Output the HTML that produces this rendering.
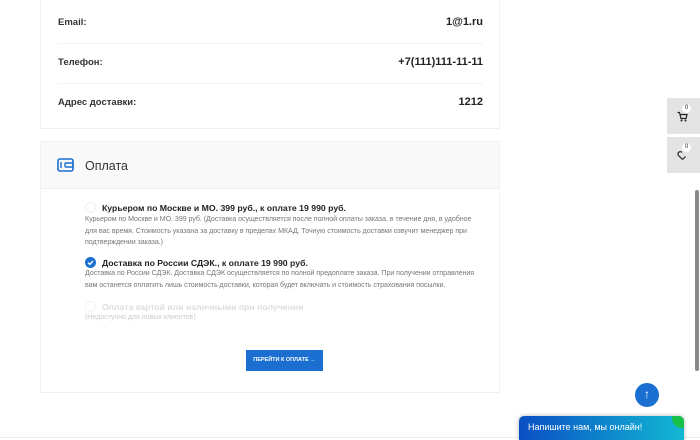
<!DOCTYPE html>
<html><head><meta charset="utf-8"><style>
*{margin:0;padding:0;box-sizing:border-box}
body{width:700px;height:438px;overflow:hidden;background:#fff;font-family:"Liberation Sans",sans-serif;position:relative;color:#222}
.card{position:absolute;left:40px;width:460px;border:1px solid #f0f0f0;background:#fff}
.row{position:absolute;left:17px;right:16px;font-size:9.5px;font-weight:bold;color:#333}
.row b{position:absolute;right:0;top:-1px;font-size:11px;color:#222}
.sep{position:absolute;left:17px;right:16px;height:1px;background:#f3f3f3}
.hdr{position:absolute;left:0;top:0;width:458px;height:47px;background:#f9f9f9;border-bottom:1px solid #eee}
.opt{position:absolute;left:44px;font-size:8.7px;font-weight:bold;color:#222}
.desc{position:absolute;left:44px;width:420px;font-size:7.1px;line-height:11.5px;color:#777;letter-spacing:-0.05px}
.rad{position:absolute;width:11px;height:11px;border-radius:50%;border:1px solid #eee;background:#fff}
</style></head><body>
<div class="card" style="top:-2px;height:131px">
 <div class="row" style="top:18px">Email:<b>1@1.ru</b></div>
 <div class="sep" style="top:44px"></div>
 <div class="row" style="top:58px">Телефон:<b>+7(111)111-11-11</b></div>
 <div class="sep" style="top:84px"></div>
 <div class="row" style="top:98px">Адрес доставки:<b>1212</b></div>
</div>
<div class="card" style="top:141px;height:252px">
 <div class="hdr">
  <svg style="position:absolute;left:16px;top:16px" width="17" height="14" viewBox="0 0 17 14"><rect x="1" y="1" width="15" height="12" rx="2" fill="none" stroke="#1a6fd0" stroke-width="1.6"/><rect x="8" y="5" width="8" height="4" rx="1" fill="none" stroke="#1a6fd0" stroke-width="1.4"/><line x1="4" y1="4" x2="4" y2="10" stroke="#1a6fd0" stroke-width="1.4"/></svg>
  <div style="position:absolute;left:44px;top:17px;font-size:12.5px;color:#333">Оплата</div>
 </div>
 <div class="rad" style="left:44px;top:60px"></div>
 <div class="opt" style="left:61px;top:61px">Курьером по Москве и МО. 399 руб., к оплате 19 990 руб.</div>
 <div class="desc" style="top:72px">Курьером по Москве и МО. 399 руб. (Доставка осуществляется после полной оплаты заказа, в течение дня, в удобное<br>для вас время. Стоимость указана за доставку в пределах МКАД. Точную стоимость доставки озвучит менеджер при<br>подтверждении заказа.)</div>
 <div class="rad" style="left:44px;top:115px;background:#1a6fd0;border-color:#1a6fd0"><svg width="9" height="9" viewBox="0 0 9 9" style="position:absolute;left:0;top:0"><path d="M2 4.6l1.8 1.8L7 3" stroke="#fff" stroke-width="1.4" fill="none"/></svg></div>
 <div class="opt" style="left:61px;top:116px">Доставка по России СДЭК., к оплате 19 990 руб.</div>
 <div class="desc" style="top:126px">Доставка по России СДЭК. Доставка СДЭК осуществляется по полной предоплате заказа. При получении отправления<br>вам останется оплатить лишь стоимость доставки, которая будет включать и стоимость страхования посылки.</div>
 <div class="rad" style="left:44px;top:159px;border-color:#f3f3f3"></div>
 <div class="opt" style="left:61px;top:160px;color:#ddd">Оплата картой или наличными при получении</div>
 <div class="desc" style="top:170px;color:#ccc">(Недоступно для новых клиентов)</div>
 <div style="position:absolute;left:205px;top:208px;width:77px;height:21px;background:#1a6fd0;color:#fff;font-size:5.5px;font-weight:bold;text-align:center;line-height:21px">ПЕРЕЙТИ К ОПЛАТЕ →</div>
</div>
<div style="position:absolute;left:0;top:437px;width:700px;height:1px;background:#eee"></div>
<div style="position:absolute;left:667px;top:98px;width:33px;height:36px;background:#e3e3e3"><svg style="position:absolute;left:10px;top:13px" width="11" height="11" viewBox="0 0 11 11"><path d="M0.5 1.5h2l1.5 6h5l1-4H3.5" fill="none" stroke="#222" stroke-width="1.2"/><circle cx="4.5" cy="9.5" r="1" fill="#222"/><circle cx="8.5" cy="9.5" r="1" fill="#222"/></svg><div style="position:absolute;left:15px;top:6px;width:9px;height:9px;border-radius:50%;background:#fff;font-size:6px;text-align:center;line-height:9px">0</div></div>
<div style="position:absolute;left:667px;top:137px;width:33px;height:36px;background:#e3e3e3"><svg style="position:absolute;left:10px;top:13px" width="11" height="11" viewBox="0 0 11 11"><path d="M5.5 9.5L1.5 5.5a2.2 2.2 0 0 1 3.5-3" fill="none" stroke="#222" stroke-width="1.2"/><path d="M5.5 9.5l3-3" fill="none" stroke="#222" stroke-width="1.2"/></svg><div style="position:absolute;left:15px;top:6px;width:9px;height:9px;border-radius:50%;background:#fff;font-size:6px;text-align:center;line-height:9px">0</div></div>
<div style="position:absolute;left:695px;top:190px;width:4px;height:181px;background:#888;border-radius:2px"></div>
<div style="position:absolute;left:635px;top:383px;width:24px;height:24px;border-radius:50%;background:#1a6fd0;color:#fff;font-size:12px;text-align:center;line-height:23px">↑</div>
<div style="position:absolute;left:519px;top:416px;width:165px;height:24px;border-radius:5px 5px 0 0;background:linear-gradient(90deg,#0a4fc4,#12b8d3);overflow:hidden;box-shadow:0 0 4px rgba(0,0,0,.3)"><div style="position:absolute;right:-8px;top:-8px;width:20px;height:20px;border-radius:50%;background:#18c04a"></div><span style="position:absolute;left:9px;top:6px;color:#fff;font-size:9px">Напишите нам, мы онлайн!</span></div>
</body></html>
